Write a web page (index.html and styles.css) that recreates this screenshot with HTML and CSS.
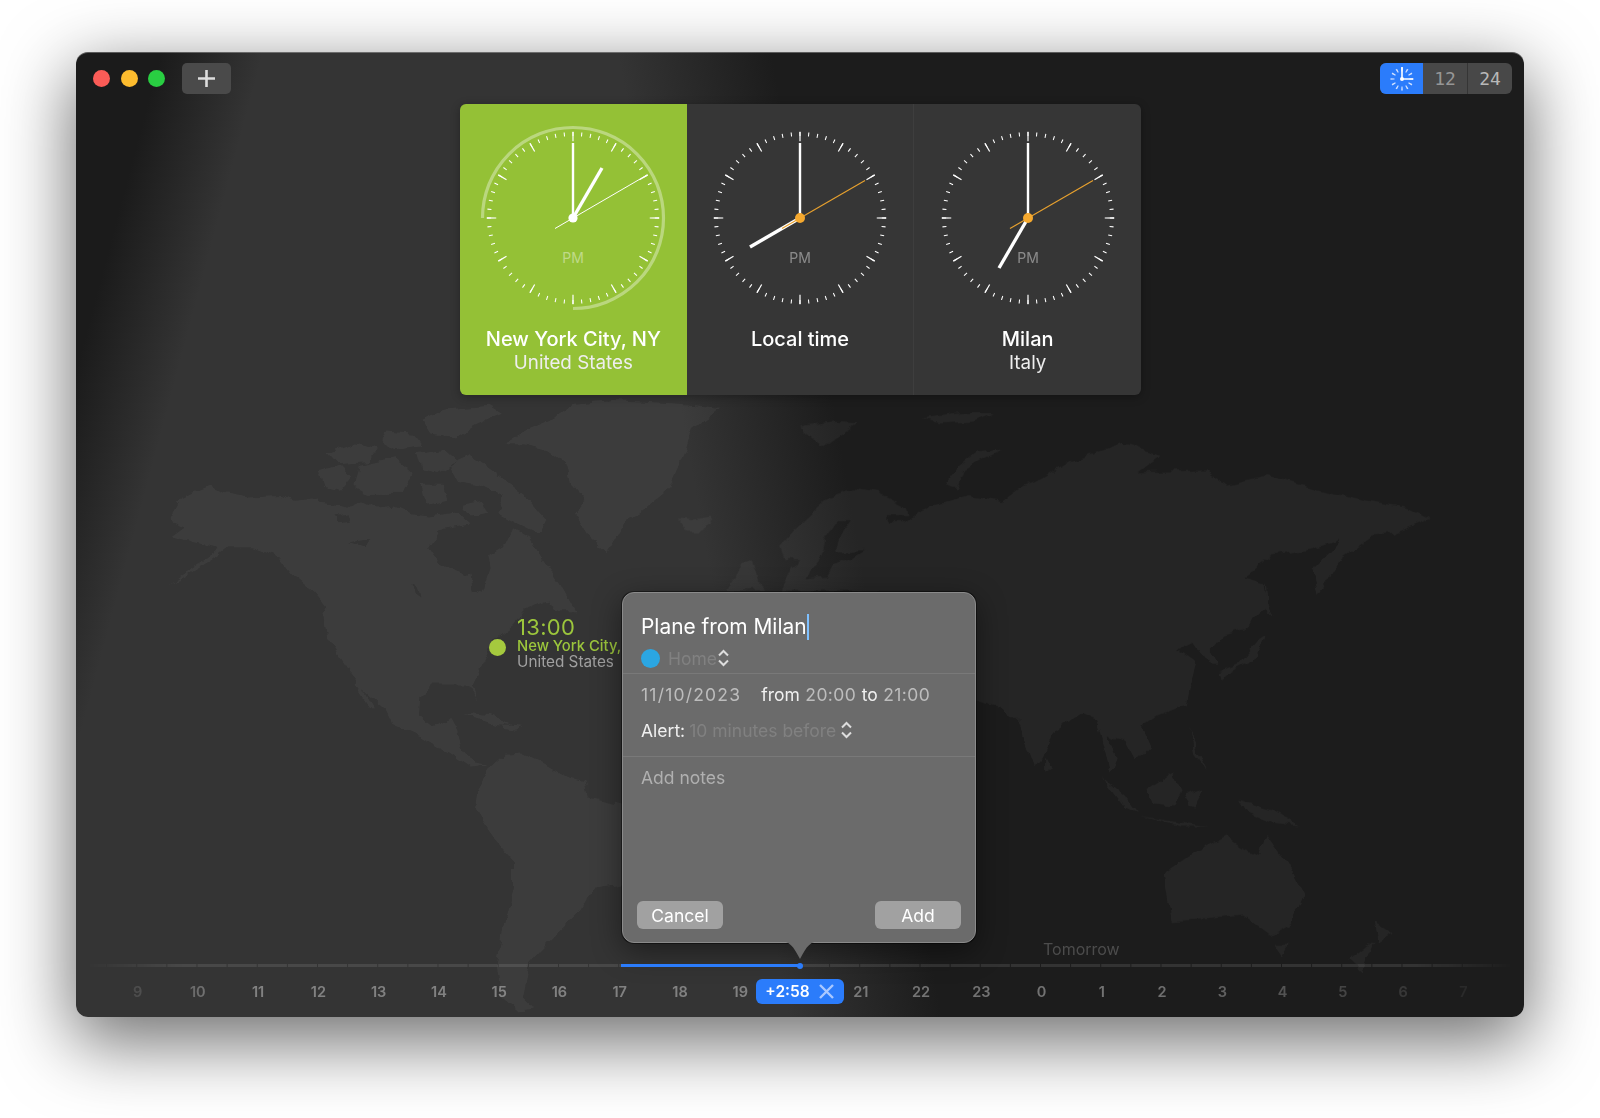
FILE: index.html
```html
<!DOCTYPE html>
<html lang="en">
<head>
  <meta charset="UTF-8">
  <meta name="viewport" content="width=device-width, initial-scale=1.0">
  <title>World Clock</title>
  <link rel="stylesheet" href="styles.css">
</head>
<body>
  <!-- shared dial for the three clocks -->
  <svg class="defs" width="0" height="0">
    <symbol id="dial" viewBox="-100 -100 200 200">
      <circle r="84" fill="none" stroke="#fff" stroke-width="4" pathLength="60" stroke-dasharray=".12 .88" stroke-dashoffset=".06"/>
      <circle r="81.5" fill="none" stroke="#fff" stroke-width="9.5" pathLength="12" stroke-dasharray=".03 .97" stroke-dashoffset=".015"/>
    </symbol>
    <!-- roughens the map polygons into a coastline -->
    <filter id="coast">
      <feTurbulence type="fractalNoise" baseFrequency=".07" numOctaves="3" seed="4"/>
      <feDisplacementMap in="SourceGraphic" scale="9" xChannelSelector="R" yChannelSelector="G"/>
    </filter>
  </svg>

  <div class="window">
    <svg class="map" viewBox="76 52 1448 965">
      <g fill="#fff" opacity=".045" fill-rule="evenodd" filter="url(#coast)">
        <!-- americas -->
        <g transform="translate(100 390) scale(.4464 .3953)">
          <path d="M155 330 175 290 165 285 205 262 245 245 285 262 335 272 400 268 440 280 490 272 495 285 530 290 560 300 590 285 620 300 660 295 700 315 735 320 800 310 830 340 760 355 735 400 760 440 830 470 835 510 855 518 875 450 870 420 905 395 925 350 960 375 985 420 1030 490 1065 560 1030 560 1000 535 950 555 925 595 885 630 870 665 840 730 835 750 850 790 825 745 790 745 745 745 715 775 712 820 745 850 785 830 800 860 810 900 840 945 870 950 830 955 770 910 720 878 655 845 640 810 590 760 570 730 550 700 510 630 500 570 510 550 480 510 430 465 400 420 340 395 290 395 250 430 190 470 150 495 240 425 270 400 210 385 160 370 190 345Z M700 490 712 495 718 525 705 515Z M525 320 555 312 560 335 535 340Z M560 385 610 375 590 395Z"/>
          <path d="M575 730 615 805 605 805 570 745Z"/>
          <path d="M720 75 770 50 870 40 900 60 840 90 800 120 740 110Z M640 105 700 110 720 140 660 150 630 130Z M510 160 570 135 620 150 600 180 530 185Z M490 205 540 190 565 220 540 255 500 245Z M580 190 660 170 700 210 680 260 600 260 570 240Z M710 160 770 150 800 180 760 210 720 200Z M780 190 830 165 880 205 950 265 1000 330 985 365 930 335 890 310 905 270 850 240 800 230Z M810 290 860 280 870 310 830 320Z M720 240 770 240 780 280 730 290Z"/>
          <path d="M815 815 870 822 930 850 890 848 840 830Z M905 845 945 852 930 862 905 858Z"/>
          <path d="M905 135 960 100 1010 75 1060 35 1150 25 1300 35 1389 45 1328 96 1315 147 1277 248 1210 309 1180 329 1165 355 1135 410 1095 370 1062 310 1085 280 1055 240 1045 190 1000 150 950 135Z"/>
          <path d="M870 960 905 925 950 922 1000 950 1040 975 1085 990 1095 1030 1175 1050 1210 1100 1175 1250 1105 1262 1075 1320 1032 1366 985 1420 961 1450 945 1536 972 1568 938 1572 900 1536 889 1455 905 1350 925 1260 925 1190 880 1130 840 1060 845 1010Z"/>
        </g>
        <!-- north atlantic and europe -->
        <g transform="translate(620 395) scale(.3333)">
          <path d="M170 370 210 375 270 365 280 385 240 410 200 410Z"/>
          <path d="M320 585 370 500 395 490 415 560 440 585Z"/>
          <path d="M480 450 520 405 580 350 630 305 700 280 780 295 860 335 865 360 800 360 815 400 850 390 905 345 960 325 1050 300 1140 320 1200 360 1200 590 480 590 515 520 545 495 495 495Z M560 550 620 545 640 510 695 490 735 465 680 468 645 470 660 420 690 378 650 378 615 430 610 470 570 520Z"/>
          <path d="M540 95 600 85 640 80 715 85 660 120 610 155 580 130Z M910 70 1020 55 1120 55 1060 80 960 85Z M975 270 1020 210 1070 170 1150 160 1090 190 1030 225 1010 280Z"/>
        </g>
        <!-- asia and australia -->
        <g transform="translate(880 390) scale(.408 .3827)">
          <path d="M0 345 60 345 130 300 240 280 300 290 350 250 400 230 470 185 600 140 690 170 630 215 800 210 850 250 950 225 1090 265 1200 290 1300 310 1350 335 1260 375 1210 380 1130 440 1075 535 1060 470 1130 390 1060 415 960 432 890 490 940 505 945 570 890 625 840 640 810 680 830 720 810 720 770 660 730 680 770 710 760 760 750 820 680 850 640 880 660 930 625 970 600 920 555 905 580 960 565 1000 530 860 500 845 420 900 400 960 380 985 340 870 300 830 240 815 0 815Z"/>
          <path d="M930 650 945 640 925 700 860 735 840 755 835 735 880 715Z M945 500 950 560 960 590 940 570Z M405 960 420 990 405 1000Z M760 880 775 940 805 1000 770 950Z"/>
          <path d="M540 1005 600 1060 630 1105 600 1090Z M630 1110 730 1130 810 1140 740 1140Z M655 1045 720 1000 740 1040 710 1090 670 1085Z M745 1060 790 1040 770 1100Z M880 1070 960 1095 1030 1140 960 1130 900 1105Z"/>
          <path d="M695 1265 770 1210 850 1165 890 1195 930 1215 945 1160 1000 1240 1040 1320 1010 1395 960 1425 890 1370 800 1380 715 1385Z M965 1450 1000 1450 985 1480Z M1210 1390 1255 1420 1220 1440Z M1150 1490 1210 1440 1180 1520Z"/>
        </g>
      </g>
    </svg>

    <div class="titlebar">
      <div class="lights">
        <span class="light red"></span>
        <span class="light yellow"></span>
        <span class="light green"></span>
        <button class="add-btn">
          <svg width="17" height="17" viewBox="0 0 17 17"><path d="M8.5 0v17M0 8.5h17" stroke="#ddd" stroke-width="2.6"/></svg>
        </button>
      </div>
      <div class="modes">
        <div class="mode active">
          <svg width="26" height="26" viewBox="-13 -13 26 26">
            <circle r="9.5" fill="none" stroke="#cfe0ff" stroke-width="4" pathLength="12" stroke-dasharray=".28 .72" stroke-dashoffset=".14"/>
            <path d="M0 0V-12M0 0H11" stroke="#fff" stroke-width="1.6"/>
            <circle r="2" fill="#fff"/>
          </svg>
        </div>
        <div class="mode seg dimmed">12</div>
        <div class="mode seg">24</div>
      </div>
    </div>

    <div class="cards">
      <div class="card selected">
        <svg class="clock" viewBox="-100 -100 200 200">
          <path d="M-90.5 0A90.5 90.5 0 1 1 0 90.5" fill="none" stroke="#fff" stroke-opacity=".36" stroke-width="3.2"/>
          <use href="#dial" x="-100" y="-100" width="200" height="200"/>
          <text class="ampm" y="45">PM</text>
          <path d="M0 0V-75" stroke="#fff" stroke-width="2.4"/>
          <path d="M0 0 29 -50" stroke="#fff" stroke-width="3.4"/>
          <path d="M-18 10.5 74 -43" stroke="#fff" stroke-width="1"/>
          <circle r="4.6" fill="#fff"/>
        </svg>
        <div class="city">New York City, NY</div>
        <div class="country">United States</div>
      </div>
      <div class="card">
        <svg class="clock" viewBox="-100 -100 200 200">
          <use href="#dial" x="-100" y="-100" width="200" height="200"/>
          <text class="ampm" y="45">PM</text>
          <path d="M0 0V-75" stroke="#fff" stroke-width="2.4"/>
          <path d="M0 0-50 29" stroke="#fff" stroke-width="3.4"/>
          <path d="M-18 10.5 65 -37.5" stroke="#e8a12e" stroke-width="1.2"/>
          <circle r="5" fill="#f5a92f"/>
        </svg>
        <div class="city">Local time</div>
      </div>
      <div class="card">
        <svg class="clock" viewBox="-100 -100 200 200">
          <use href="#dial" x="-100" y="-100" width="200" height="200"/>
          <text class="ampm" y="45">PM</text>
          <path d="M0 0V-75" stroke="#fff" stroke-width="2.4"/>
          <path d="M0 0-29 50" stroke="#fff" stroke-width="3.4"/>
          <path d="M-18 10.5 65 -37.5" stroke="#e8a12e" stroke-width="1.2"/>
          <circle r="5" fill="#f5a92f"/>
        </svg>
        <div class="city">Milan</div>
        <div class="country">Italy</div>
      </div>
    </div>

    <div class="pin">
      <span class="pin-dot"></span>
      <div class="pin-text">
        <div class="pin-time">13:00</div>
        <div class="pin-city">New York City, NY</div>
        <div class="pin-country">United States</div>
      </div>
    </div>

    <div class="popover">
      <div class="pop-head">
        <div class="pop-title">Plane from Milan<span class="caret"></span></div>
        <div class="pop-row cal">
          <span class="cal-dot"></span>
          <span class="dim">Home</span>
          <svg class="updown" width="11" height="18" viewBox="0 0 11 18"><path d="M1 6.5 5.500 2 10 6.500M1 11.500 5.500 16 10 11.500" fill="none" stroke="#ddd" stroke-width="2"/></svg>
        </div>
      </div>
      <div class="pop-when">
        <div class="pop-row">
          <span class="value date">11/10/2023</span>
          <span>from</span><span class="value">20:00</span>
          <span>to</span><span class="value">21:00</span>
        </div>
        <div class="pop-row alert">
          <span>Alert:</span>
          <span class="dim">10 minutes before</span>
          <svg class="updown" width="11" height="18" viewBox="0 0 11 18"><path d="M1 6.5 5.500 2 10 6.500M1 11.500 5.500 16 10 11.500" fill="none" stroke="#ddd" stroke-width="2"/></svg>
        </div>
      </div>
      <div class="pop-notes">Add notes</div>
      <div class="pop-buttons">
        <button class="pop-btn">Cancel</button>
        <button class="pop-btn">Add</button>
      </div>
      <svg class="pop-arrow" width="42" height="19" viewBox="0 0 42 19"><path d="M0 0C11 0 14 5 21 18 28 5 31 0 42 0Z" fill="#6b6b6b"/></svg>
    </div>

    <div class="timeline">
      <div class="tomorrow">Tomorrow</div>
      <div class="track">
        <div class="progress"></div>
      </div>
      <div class="hours">
        <span>9</span><span>10</span><span>11</span><span>12</span><span>13</span><span>14</span><span>15</span><span>16</span><span>17</span><span>18</span><span>19</span>
        <div class="offset">+2:58
          <svg width="15" height="15" viewBox="0 0 15 15"><path d="M1 1 14 14M14 1 1 14" stroke="#a9c8ff" stroke-width="2.4"/></svg>
        </div>
        <span>21</span><span>22</span><span>23</span><span>0</span><span>1</span><span>2</span><span>3</span><span>4</span><span>5</span><span>6</span><span>7</span>
      </div>
    </div>
  </div>
</body>
</html>
```

FILE: styles.css
```css
html, body { height: 100%; }
body { margin: 0; background: #fff; overflow: hidden; font-family: Inter, "Noto Sans", sans-serif; color: #fff; }
.defs { position: absolute; }

.window { position: relative; box-sizing: border-box; width: 1448px; height: 965px; margin: 52px 0 0 76px; border-radius: 12px; display: flex; flex-direction: column;
  background: linear-gradient(105deg, #1b1b1b 5%, rgba(27,27,27,0) 11%), linear-gradient(80deg, #343434 44%, #1c1c1c 53.500%);
  box-shadow: inset 0 1px 0 rgba(255,255,255,.28), 0 22px 70px 4px rgba(0,0,0,.56); }
.map { position: absolute; left: 0; top: 0; width: 1448px; height: 965px; }

.titlebar { position: relative; display: flex; justify-content: space-between; padding: 11px 12px 0 17px; }
.lights { display: flex; align-items: center; gap: 10.500px; }
.light { width: 17px; height: 17px; border-radius: 50%; }
.light.red { background: #fb5c57; }
.light.yellow { background: #fdbc2e; }
.light.green { background: #29ce42; }
.add-btn { display: flex; align-items: center; justify-content: center; width: 49px; height: 31px; margin-left: 6px; padding: 0; background: #4a4a4a; border: none; border-radius: 5px; }

.modes { display: flex; height: 31px; border-radius: 6px; overflow: hidden; background: #484848; }
.mode { display: flex; align-items: center; justify-content: center; width: 44px; }
.mode.active { background: #2b7cfb; width: 43px; }
.mode.seg { font-family: "DejaVu Sans Mono", monospace; font-size: 18px; color: #b8b8b8; }
.mode.seg.dimmed { color: #969696; }
.mode.seg + .mode.seg { border-left: 1px solid #353535; }

.cards { position: relative; display: flex; align-self: center; width: 681px; height: 291px; margin-top: 10px; margin-left: 1px; border-radius: 6px; background: #363636; box-shadow: 0 2px 10px rgba(0,0,0,.3); }
.card { flex: 1; padding-top: 14px; text-align: center; }
.card + .card + .card { border-left: 1px solid #3e3e3e; }
.card.selected { background: #94c136; border-radius: 6px 0 0 6px; }
.clock { display: block; width: 200px; height: 200px; margin: 0 auto; }
.ampm { font-size: 14px; fill: #fff; fill-opacity: .42; text-anchor: middle; }
.city { margin-top: 9px; font-size: 20px; line-height: 24px; font-weight: 500; }
.country { font-size: 18.800px; line-height: 24px; color: #eee; }

.pin { position: absolute; left: 413px; top: 563px; display: flex; align-items: center; gap: 11px; }
.pin-dot { width: 17px; height: 17px; margin-top: 10px; border-radius: 50%; background: #a5c93e; }
.pin-time { font-size: 22px; line-height: 24px; letter-spacing: .3px; color: #9cc63c; }
.pin-city { font-size: 14.800px; line-height: 15px; font-weight: 500; color: #9cc63c; white-space: nowrap; }
.pin-country { font-size: 15.300px; line-height: 15px; color: #a0a0a0; }

.popover { position: absolute; left: 546px; top: 540px; box-sizing: border-box; width: 354px; height: 351px; display: flex; flex-direction: column; border-radius: 12px; background: #6b6b6b; border: 1px solid #8a8a8a; box-shadow: 0 0 0 1px rgba(0,0,0,.45), 0 8px 30px rgba(0,0,0,.45); font-size: 17.500px; color: #f0f0f0; }
.pop-head { height: 81px; box-sizing: border-box; padding: 20px 18px 0; border-bottom: 1px solid #797979; }
.pop-title { font-size: 20.900px; line-height: 27px; color: #fff; }
.caret { display: inline-block; width: 2px; height: 26px; vertical-align: -6px; background: #7ec0ff; }
.pop-row { display: flex; align-items: center; height: 26px; white-space: nowrap; }
.pop-row.cal { margin-top: 5px; }
.cal-dot { width: 19px; height: 19px; margin-right: 8px; border-radius: 50%; background: #2ba6e2; }
.dim { color: #818181; }
.pop-when { height: 83px; box-sizing: border-box; padding: 7px 18px 0; border-bottom: 1px solid #797979; }
.pop-when .pop-row { gap: 5.500px; }
.value { color: #bdbdbd; letter-spacing: .4px; }
.value.date { margin-right: 14.500px; letter-spacing: 1.200px; }
.pop-when .alert { margin-top: 10px; gap: 4px; }
.updown { flex: none; margin-left: 1px; }
.pop-notes { flex: 1; padding: 8px 18px 0; line-height: 26px; color: #b0b0b0; }
.pop-buttons { display: flex; justify-content: space-between; padding: 0 14px 13px; }
.pop-btn { width: 86px; height: 28px; padding: 0; border: none; border-radius: 6px; background: #a1a1a1; color: #fff; font: 17.500px Inter, "Noto Sans", sans-serif; }
.pop-arrow { position: absolute; left: 156px; top: 348px; }

.timeline { position: relative; margin-top: auto; padding-bottom: 13px; }
.tomorrow { height: 20px; padding-left: 967px; margin-bottom: 5px; font-size: 16px; line-height: 20px; color: #4c4c4c; }
.track { position: relative; height: 3px; margin: 0 8px 12px; }
.track::before { content: ""; position: absolute; left: 0; top: 0; right: 0; bottom: 0;
  background: linear-gradient(90deg, rgba(255,255,255,.1) 29.100px, transparent 29.100px) 23.100px 0 / 30.130px 100%;
  mask-image: linear-gradient(90deg, transparent 0, #000 7%, #000 93%, transparent 100%); }
.progress { position: absolute; left: 537px; top: 0; width: 179px; height: 3px; background: #2b7cfb; }
.progress::after { content: ""; position: absolute; right: -3px; top: -1.500px; width: 6px; height: 6px; border-radius: 50%; background: #2b7cfb; }
.hours { position: relative; display: flex; justify-content: center; height: 25px; align-items: center; padding-left: 1px; font-size: 14.500px; font-weight: 600; color: rgba(255,255,255,.38);
  mask-image: linear-gradient(90deg, transparent 1%, #000 11%, #000 74%, transparent 100%); }
.hours span { flex: none; width: 60.270px; text-align: center; }
.offset { flex: none; display: flex; align-items: center; justify-content: center; gap: 9px; box-sizing: border-box; width: 88px; height: 25px; margin: 0 -12.860px 0 -14.860px; border-radius: 6px; background: #2b7cfb; color: #fff; font-size: 15.500px; }
```
